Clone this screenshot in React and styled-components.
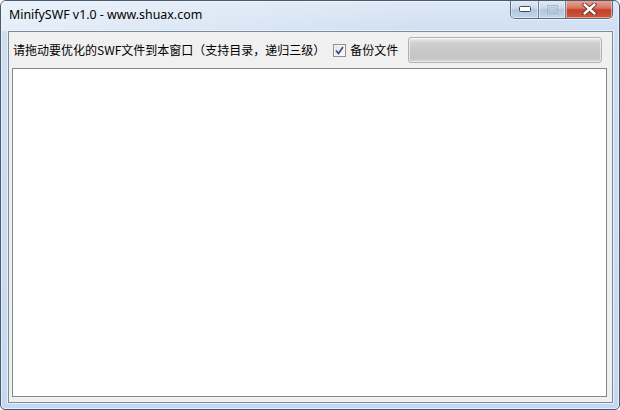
import React from "react";
import styled, { createGlobalStyle } from "styled-components";

const Global = createGlobalStyle`
  html, body { margin: 0; padding: 0; background: #ffffff; }
  body { width: 620px; height: 410px; overflow: hidden; }
  * { box-sizing: border-box; }
`;

const Window = styled.div`
  width: 620px;
  height: 410px;
  border: 1px solid #4a5a6e;
  border-radius: 6px 6px 5px 5px;
  background: linear-gradient(180deg, #dde8f5 0px, #cfdff2 30px, #c4d9f1 100%);
  box-shadow: inset 0 0 0 1px rgba(255, 255, 255, 0.55);
  display: flex;
  flex-direction: column;
  overflow: hidden;
`;

const TitleBar = styled.div`
  height: 30px;
  display: flex;
  align-items: flex-start;
  justify-content: space-between;
  padding: 0 6px 0 8px;
  background: linear-gradient(90deg, rgba(238, 244, 251, 0.75) 0%, rgba(238, 244, 251, 0.25) 45%, rgba(238, 244, 251, 0) 70%);
`;

const Title = styled.div`
  font-family: "Noto Sans", "Segoe UI", sans-serif;
  font-size: 12.4px;
  line-height: 14px;
  color: #000;
  padding-top: 7px;
`;

const Controls = styled.div`
  display: flex;
  height: 19px;
  margin-top: -1px;
  border: 1px solid #5b6c80;
  border-top: none;
  border-radius: 0 0 5px 5px;
  overflow: hidden;
  box-shadow: 0 1px 0 rgba(255, 255, 255, 0.6);
`;

const CtlButton = styled.div`
  width: ${(p) => p.$w}px;
  height: 100%;
  display: flex;
  align-items: center;
  justify-content: center;
  border-left: ${(p) => (p.$first ? "none" : "1px solid #6f8096")};
  background: ${(p) =>
    p.$close
      ? "linear-gradient(180deg, #e9a99c 0%, #d8735f 45%, #c2412a 55%, #cc5a3e 100%)"
      : "linear-gradient(180deg, #e3ecf6 0%, #cbd9ea 45%, #b3c6dd 55%, #c3d5ea 100%)"};
  box-shadow: inset 0 0 0 1px rgba(255, 255, 255, 0.45);
`;

const Client = styled.div`
  flex: 1;
  margin: 0 6px 6px 7px;
  border: 1px solid #7f8a98;
  outline: 1px solid #e8f0fa;
  background: #f0f0f0;
  display: flex;
  flex-direction: column;
  padding: 5px 5px 5px 3px;
  gap: 5px;
`;

const Toolbar = styled.div`
  display: flex;
  align-items: center;
  height: 26px;
`;

const Label = styled.span`
  font-family: "Noto Sans CJK SC", "Microsoft YaHei", sans-serif;
  font-size: 12px;
  line-height: 16px;
  color: #000;
  white-space: nowrap;
  margin-left: 1px;
`;

const CheckWrap = styled.label`
  display: flex;
  align-items: center;
  gap: 3px;
  margin-left: 8px;
`;

const Box = styled.span`
  width: 13px;
  height: 13px;
  border: 1px solid #8e8f8f;
  background: linear-gradient(135deg, #dcdcdc 0%, #f4f4f4 60%, #ffffff 100%);
  box-shadow: inset 0 0 0 1px #f6f6f6;
  display: flex;
  align-items: center;
  justify-content: center;
`;

const Progress = styled.div`
  width: 194px;
  height: 26px;
  margin-left: 10px;
  border: 1px solid #b2b2b2;
  border-radius: 3px;
  background: linear-gradient(180deg, #f2f2f2 0%, #d2d2d2 18%, #c8c8c8 50%, #c6c6c6 85%, #d8d8d8 100%);
  box-shadow: inset 0 0 0 1px rgba(255, 255, 255, 0.5);
`;

const DropArea = styled.div`
  flex: 1;
  background: #ffffff;
  border: 1px solid #828790;
`;

function MinIcon() {
  return (
    <svg width="12" height="6" viewBox="0 0 12 6">
      <rect x="0.5" y="0.5" width="11" height="5" rx="1" fill="#ffffff" stroke="#3b4a5d" />
    </svg>
  );
}

function MaxIcon() {
  return (
    <svg width="11" height="9" viewBox="0 0 11 9">
      <rect x="0.5" y="0.5" width="10" height="8" fill="none" stroke="#a7b7ca" />
      <rect x="2.5" y="2.5" width="6" height="4" fill="none" stroke="#b5c4d5" />
    </svg>
  );
}

function CloseIcon() {
  return (
    <svg width="15" height="12" viewBox="0 0 15 12">
      <path d="M2.5 1.5 L12.5 10.5 M12.5 1.5 L2.5 10.5" stroke="#5a2a22" strokeWidth="4.2" strokeLinecap="round" />
      <path d="M2.5 1.5 L12.5 10.5 M12.5 1.5 L2.5 10.5" stroke="#ffffff" strokeWidth="2.4" strokeLinecap="round" />
    </svg>
  );
}

function CheckMark() {
  return (
    <svg width="9" height="9" viewBox="0 0 9 9">
      <path d="M1 4.5 L3.5 7.5 L8 1" fill="none" stroke="#3c4d8a" strokeWidth="1.7" />
    </svg>
  );
}

export default function App() {
  return (
    <>
      <Global />
      <Window>
        <TitleBar>
          <Title>MinifySWF v1.0 - www.shuax.com</Title>
          <Controls>
            <CtlButton $w={27} $first>
              <MinIcon />
            </CtlButton>
            <CtlButton $w={27}>
              <MaxIcon />
            </CtlButton>
            <CtlButton $w={47} $close>
              <CloseIcon />
            </CtlButton>
          </Controls>
        </TitleBar>
        <Client>
          <Toolbar>
            <Label>请拖动要优化的SWF文件到本窗口（支持目录，递归三级）</Label>
            <CheckWrap>
              <Box>
                <CheckMark />
              </Box>
              <Label>备份文件</Label>
            </CheckWrap>
            <Progress />
          </Toolbar>
          <DropArea />
        </Client>
      </Window>
    </>
  );
}
